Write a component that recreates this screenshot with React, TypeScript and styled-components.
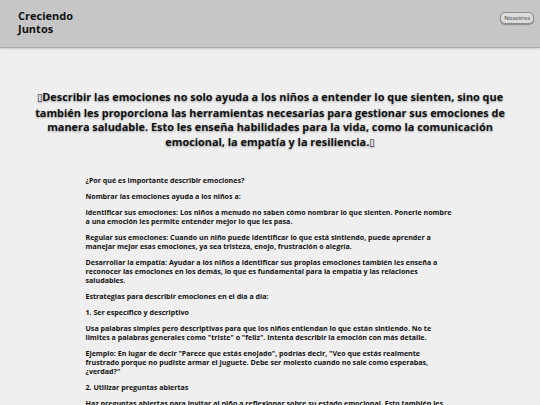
import React from 'react';
import styled, { createGlobalStyle } from 'styled-components';

const GlobalStyle = createGlobalStyle`
    html, body {
        margin: 0;
        padding: 0;
        background-color: #efefef;
        font-family: 'Open Sans', 'Liberation Sans', sans-serif;
        color: #1a1a1a;
    }
`;

const paragraphs: string[] = [
    '¿Por qué es importante describir emociones?',
    'Nombrar las emociones ayuda a los niños a:',
    'Identificar sus emociones: Los niños a menudo no saben cómo nombrar lo que sienten. Ponerle nombre a una emoción les permite entender mejor lo que les pasa.',
    'Regular sus emociones: Cuando un niño puede identificar lo que está sintiendo, puede aprender a manejar mejor esas emociones, ya sea tristeza, enojo, frustración o alegría.',
    'Desarrollar la empatía: Ayudar a los niños a identificar sus propias emociones también les enseña a reconocer las emociones en los demás, lo que es fundamental para la empatía y las relaciones saludables.',
    'Estrategias para describir emociones en el día a día:',
    '1. Ser específico y descriptivo',
    'Usa palabras simples pero descriptivas para que los niños entiendan lo que están sintiendo. No te limites a palabras generales como "triste" o "feliz". Intenta describir la emoción con más detalle.',
    'Ejemplo: En lugar de decir "Parece que estás enojado", podrías decir, "Veo que estás realmente frustrado porque no pudiste armar el juguete. Debe ser molesto cuando no sale como esperabas, ¿verdad?"',
    '2. Utilizar preguntas abiertas',
    'Haz preguntas abiertas para invitar al niño a reflexionar sobre su estado emocional. Esto también les permite procesar lo que sienten y aprender a expresarse con mayor claridad.',
];

// the emoji in the original text shows as a missing-glyph box
const Box = () => <Tofu>{'\u25AF'}</Tofu>;

const App: React.FunctionComponent = () => {
    return (
        <>
            <GlobalStyle />
            <Header>
                <Brand>
                    Creciendo
                    <br />
                    Juntos
                </Brand>
                <NavButton>Nosotros</NavButton>
            </Header>
            <Main>
                <Intro>
                    <Box />Describir las emociones no solo ayuda a los niños a
                    entender lo que sienten, sino que también les proporciona las
                    herramientas necesarias para gestionar sus emociones de manera
                    saludable. Esto les enseña habilidades para la vida, como la
                    comunicación emocional, la empatía y la resiliencia.<Box />
                </Intro>
                <Article>
                    {paragraphs.map((p, i) => (
                        <Paragraph key={i}>{p}</Paragraph>
                    ))}
                </Article>
            </Main>
        </>
    );
};

export default App;

const Header = styled.header`
    display: flex;
    align-items: center;
    justify-content: space-between;
    height: 47px;
    padding: 0 6px 0 18px;
    background-color: #c6c6c6;
    border-bottom: 1px solid #a9a9a9;
    box-shadow: 0 1px 2px rgba(0, 0, 0, 0.15);
`;

const Brand = styled.div`
    font-weight: 700;
    font-size: 11px;
    line-height: 12.5px;
    color: #111;
    margin-top: -2px;
`;

const NavButton = styled.button`
    align-self: flex-start;
    margin-top: 12px;
    padding: 1px 3px;
    font-family: 'Open Sans', sans-serif;
    font-size: 6px;
    color: #333;
    background-color: #dcdcdc;
    border: 1px solid #8c8c8c;
    border-radius: 5px;
    box-shadow: 0 1px 1px rgba(0, 0, 0, 0.3);
`;

const Main = styled.main`
    display: flex;
    flex-direction: column;
    align-items: center;
`;

const Intro = styled.h2`
    margin: 42px 0 0;
    padding: 0 32px;
    text-align: center;
    font-size: 10.9px;
    line-height: 14.6px;
    font-weight: 700;
    color: #111;
    text-shadow: 0 1px 2px rgba(0, 0, 0, 0.35);
`;

const Tofu = styled.span`
    font-family: 'DejaVu Sans', sans-serif;
    font-weight: 400;
    font-size: 0.9em;
`;

const Article = styled.article`
    width: 369px;
    margin-top: 26px;
`;

const Paragraph = styled.p`
    margin: 0 0 7px;
    font-size: 7.1px;
    line-height: 9px;
    font-weight: 700;
    color: #111;
`;
